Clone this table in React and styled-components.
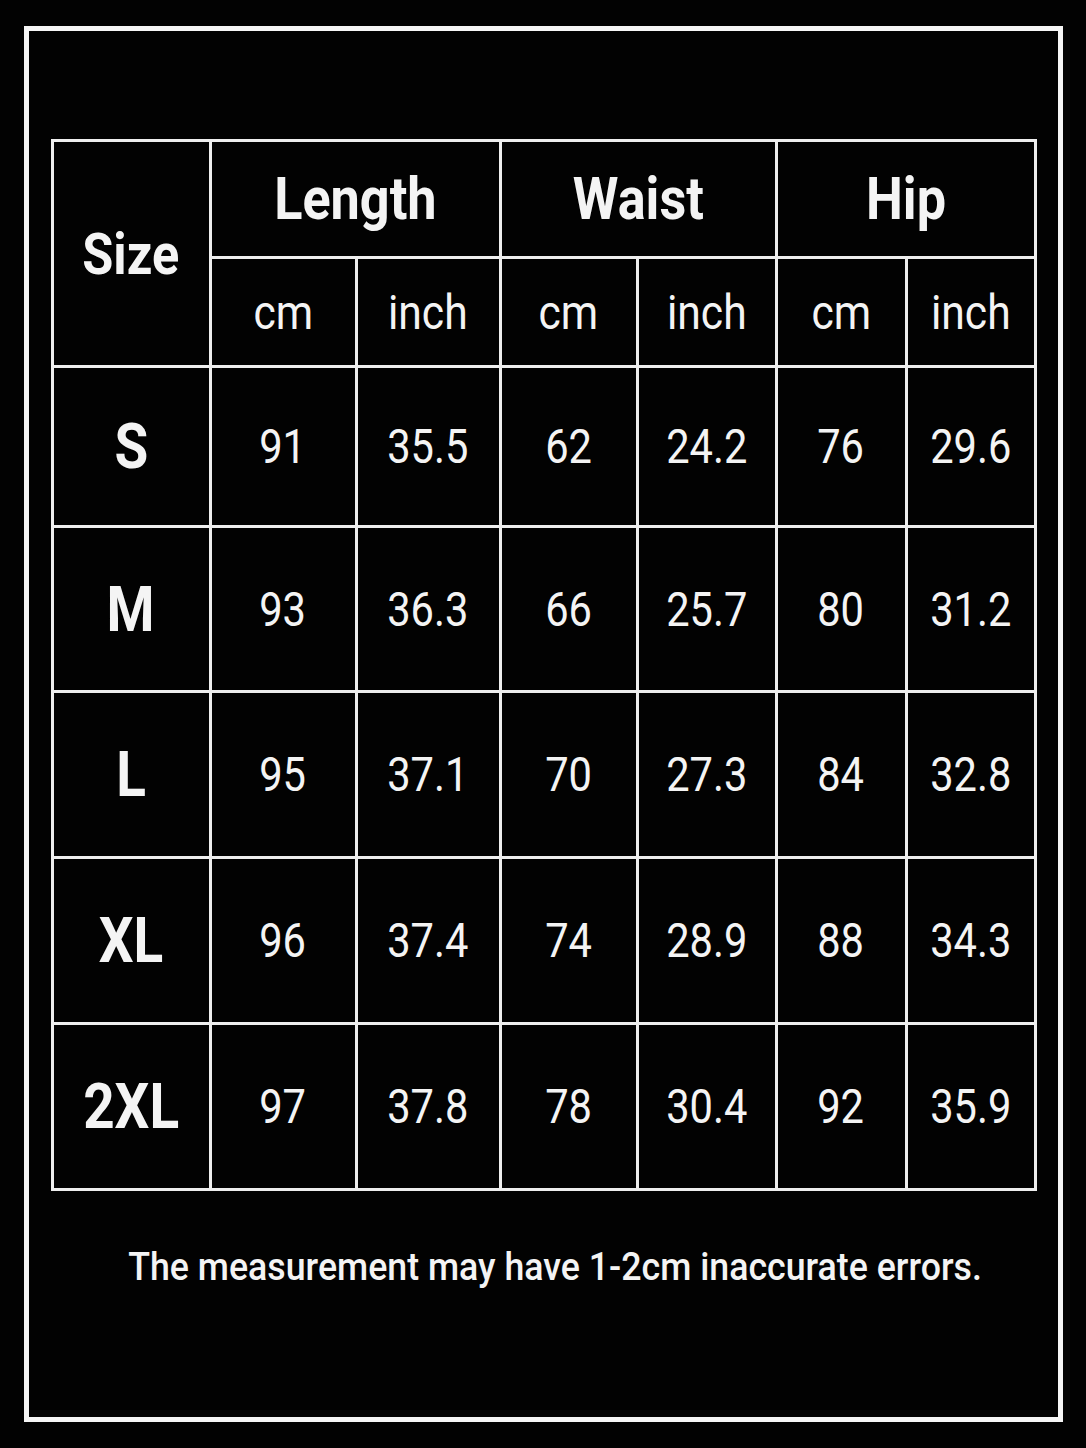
import styled, { createGlobalStyle } from "styled-components";

const GlobalStyle = createGlobalStyle`
  html, body {
    margin: 0;
    padding: 0;
    background: #000;
  }
  body {
    font-family: Roboto, "Liberation Sans", sans-serif;
    color: #f4f4f4;
  }
`;

const Page = styled.div`
  width: 1086px;
  height: 1448px;
  padding: 26px 23px 26px 24px;
  box-sizing: border-box;
  background: #020202;
`;

const Frame = styled.div`
  height: 100%;
  border: 5px solid #f6f6f6;
  box-sizing: border-box;
  padding: 108px 21px 0 21px;
  display: flex;
  flex-direction: column;
  align-items: center;
`;

const Table = styled.table`
  border-collapse: collapse;
  table-layout: fixed;
  width: 986px;
  border: 3px solid #eeeeee;
`;

const Cell = styled.td`
  border: 3px solid #eeeeee;
  padding: 0;
  text-align: center;
  vertical-align: middle;
  height: ${(p) => p.h}px;
  font-weight: ${(p) => (p.bold ? 700 : 400)};
  font-size: ${(p) => p.size}px;
  line-height: 1;
`;

const Squeeze = styled.span`
  display: inline-block;
  transform: scaleX(${(p) => p.sx || 0.87});
  white-space: nowrap;
`;

const Note = styled.p`
  margin: 57px 0 0;
  padding-left: 24px;
  font-size: 38px;
  font-weight: 500;
  line-height: 1;
  text-align: center;
`;

const widths = [158, 146, 144, 137, 139, 130, 129];

const rows = [
  ["S", "91", "35.5", "62", "24.2", "76", "29.6", 157],
  ["M", "93", "36.3", "66", "25.7", "80", "31.2", 162],
  ["L", "95", "37.1", "70", "27.3", "84", "32.8", 163],
  ["XL", "96", "37.4", "74", "28.9", "88", "34.3", 163],
  ["2XL", "97", "37.8", "78", "30.4", "92", "35.9", 163],
];

const groups = ["Length", "Waist", "Hip"];

export default function App() {
  return (
    <Page>
      <GlobalStyle />
      <Frame>
        <Table>
          <colgroup>
            {widths.map((w, i) => (
              <col key={i} style={{ width: w }} />
            ))}
          </colgroup>
          <tbody>
            <tr>
              <Cell as="th" rowSpan={2} bold size={58} h={114}>
                <Squeeze>Size</Squeeze>
              </Cell>
              {groups.map((g) => (
                <Cell as="th" key={g} colSpan={2} bold size={60} h={114}>
                  <Squeeze>{g}</Squeeze>
                </Cell>
              ))}
            </tr>
            <tr>
              {groups.map((g) =>
                ["cm", "inch"].map((u) => (
                  <Cell as="th" key={g + u} size={49} h={106}>
                    <Squeeze>{u}</Squeeze>
                  </Cell>
                ))
              )}
            </tr>
            {rows.map((r) => (
              <tr key={r[0]}>
                <Cell bold size={63} h={r[7]}>
                  <Squeeze>{r[0]}</Squeeze>
                </Cell>
                {r.slice(1, 7).map((v, i) => (
                  <Cell key={i} size={49} h={r[7]}>
                    <Squeeze sx={0.85}>{v}</Squeeze>
                  </Cell>
                ))}
              </tr>
            ))}
          </tbody>
        </Table>
        <Note>
          <Squeeze sx={0.94}>The measurement may have 1-2cm inaccurate errors.</Squeeze>
        </Note>
      </Frame>
    </Page>
  );
}
